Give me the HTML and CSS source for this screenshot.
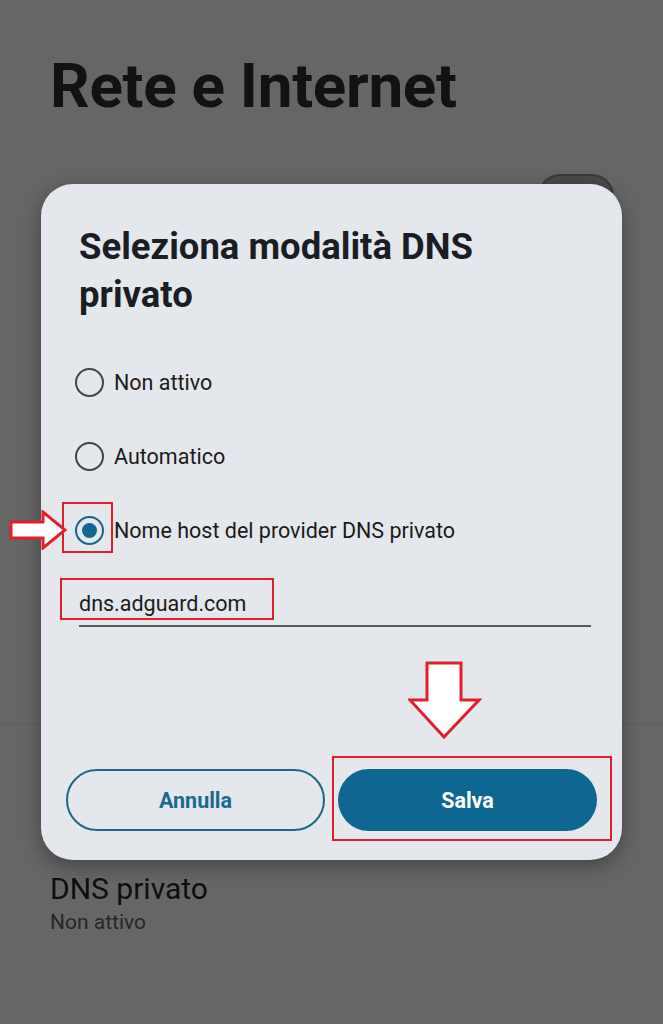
FILE: index.html
```html
<!DOCTYPE html>
<html lang="it">
<head>
    <meta charset="UTF-8">
    <meta name="viewport" content="width=device-width, initial-scale=1.0">
    <title>Rete e Internet</title>
    <link rel="stylesheet" href="styles.css">
</head>
<body>
    <div class="screen">
        <h1 class="page-title">Rete e Internet</h1>
        <div class="toggle-behind"></div>
        <div class="divider-behind"></div>

        <div class="dialog">
            <h2 class="dialog-title">Seleziona modalità DNS privato</h2>

            <div class="options">
                <label class="option">
                    <span class="radio"></span>
                    <span class="option-label">Non attivo</span>
                </label>
                <label class="option">
                    <span class="radio"></span>
                    <span class="option-label">Automatico</span>
                </label>
                <label class="option">
                    <span class="radio checked"></span>
                    <span class="option-label">Nome host del provider DNS privato</span>
                    <span class="mark mark-radio"></span>
                    <svg class="arrow-right" width="58" height="40" viewBox="0 0 58 40">
                        <path d="M2 12 H34 V2 L56 20 L34 38 V28 H2 Z" fill="#fff" stroke="#e0202c" stroke-width="3"/>
                    </svg>
                </label>
            </div>

            <div class="host-field">
                <span class="host-value">dns.adguard.com</span>
                <span class="mark mark-host"></span>
            </div>

            <div class="actions">
                <button class="btn btn-outline">Annulla</button>
                <button class="btn btn-fill">Salva</button>
                <span class="mark mark-save"></span>
                <svg class="arrow-down" width="74" height="80" viewBox="0 0 74 80">
                    <path d="M19 2 H53 V39 H71 L36 76 L2 39 H19 Z" fill="#fff" stroke="#e0202c" stroke-width="3"/>
                </svg>
            </div>
        </div>

        <div class="setting">
            <div class="setting-name">DNS privato</div>
            <div class="setting-value">Non attivo</div>
        </div>
    </div>
</body>
</html>
```

FILE: styles.css
```css
body {
    margin: 0;
    background-color: #666666;
    font-family: Roboto, "Noto Sans", sans-serif;
}
.screen {
    position: relative;
    height: 1024px;
    overflow: hidden;
}
.page-title {
    margin: 0;
    padding: 50px 0 0 50px;
    font-size: 62px;
    font-weight: 700;
    letter-spacing: -0.3px;
    color: #121212;
    line-height: 72px;
}
.toggle-behind {
    position: absolute;
    left: 540px;
    top: 176px;
    width: 72px;
    height: 40px;
    border-radius: 20px;
    background-color: #4a4a4a;
    box-shadow: 0 0 0 2px #3a3a3a;
}
.divider-behind {
    position: absolute;
    left: 0;
    right: 0;
    top: 724px;
    height: 1px;
    background-color: #5f5f5f;
}

.dialog {
    position: relative;
    margin: 62px 0 0 41px;
    width: 581px;
    height: 676px;
    box-sizing: border-box;
    padding: 39px 31px 0 38px;
    background-color: #e4e7ec;
    border-radius: 32px;
    box-shadow: 0 6px 20px rgba(0, 0, 0, 0.35);
}
.dialog-title {
    margin: 0;
    width: 450px;
    font-size: 36.5px;
    font-weight: 700;
    line-height: 48px;
    color: #1b1d24;
}

.options {
    margin-top: 40px;
    display: flex;
    flex-direction: column;
    gap: 28px;
}
.option {
    position: relative;
    display: flex;
    align-items: center;
    height: 46px;
    margin-left: -4px;
}
.radio {
    width: 25px;
    height: 25px;
    border: 2.5px solid #454545;
    border-radius: 50%;
    box-sizing: content-box;
    position: relative;
    margin-right: 10px;
}
.radio.checked {
    border-color: #1a6383;
}
.radio.checked::after {
    content: "";
    position: absolute;
    left: 5px;
    top: 5px;
    width: 15px;
    height: 15px;
    border-radius: 50%;
    background-color: #13668f;
}
.option-label {
    font-size: 21.5px;
    color: #1b1b1b;
}

.mark {
    position: absolute;
    border: 2.5px solid #df1f2b;
    box-sizing: border-box;
}
.mark-radio {
    left: -13px;
    top: -5px;
    width: 51px;
    height: 51px;
}
.arrow-right {
    position: absolute;
    left: -66px;
    top: 3px;
}

.host-field {
    position: relative;
    margin-top: 38px;
    height: 34px;
    border-bottom: 2px solid #5a5a5a;
}
.host-value {
    display: block;
    font-size: 21.5px;
    color: #1b1b1b;
}
.mark-host {
    left: -19px;
    top: -13px;
    width: 214px;
    height: 42px;
}

.actions {
    position: relative;
    margin: 142px 0 0 -13px;
    display: flex;
    gap: 13px;
}
.btn {
    flex: none;
    width: 259px;
    height: 62px;
    border-radius: 31px;
    font-family: Roboto, sans-serif;
    font-size: 21.5px;
    font-weight: 700;
    box-sizing: border-box;
}
.btn-outline {
    background-color: transparent;
    border: 2px solid #1e6688;
    color: #1b6a8e;
}
.btn-fill {
    background-color: #0f6690;
    border: none;
    color: #ffffff;
}
.mark-save {
    left: 266px;
    top: -13px;
    width: 280px;
    height: 85px;
}
.arrow-down {
    position: absolute;
    left: 342px;
    top: -108px;
}

.setting {
    padding: 10px 0 0 50px;
}
.setting-name {
    font-size: 30px;
    color: #0f0f0f;
    line-height: 38px;
}
.setting-value {
    font-size: 21px;
    color: #262626;
    line-height: 28px;
}
```
